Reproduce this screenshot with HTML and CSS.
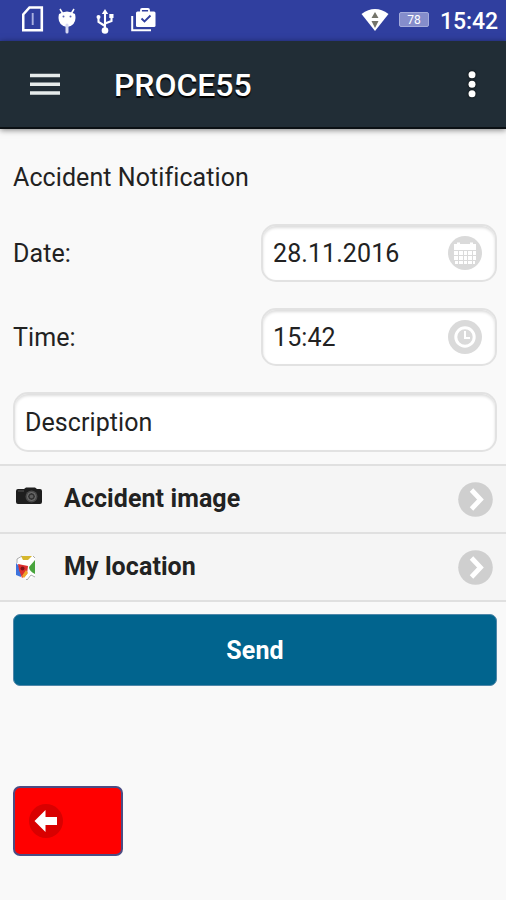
FILE: index.html
```html
<!DOCTYPE html>
<html lang="en">
<head>
<meta charset="utf-8">
<title>PROCE55</title>
<link rel="stylesheet" href="styles.css">
</head>
<body>
<div class="status">
  <div class="status-left">
    <svg width="22" height="26" viewBox="0 0 22 26"><path d="M7.500 1.500H19.800V24.300H1.200V8.500z" fill="none" stroke="#fff" stroke-width="2.600"/><path d="M10.700 7v12" stroke="#a9b0e0" stroke-width="1.900"/></svg>
    <svg class="droid" width="20" height="27" viewBox="0 0 20 27"><path d="M3 1l3 5M17 1l-3 5" stroke="#fff" stroke-width="1.500"/><path d="M2 6Q10 1 18 6Q20.500 17 10 19Q-.5 17 2 6z" fill="#fff"/><path d="M10 17v7" stroke="#d6d9f2" stroke-width="3" stroke-linecap="round"/><circle cx="6.500" cy="8.500" r="1" fill="#5963b5"/><circle cx="13.500" cy="8.500" r="1" fill="#5963b5"/></svg>
    <svg class="usb" width="18" height="26" viewBox="0 0 18 26"><path d="M9 3v19M9 17L2.500 13V8M9 14.500L15.500 12V7" fill="none" stroke="#fff" stroke-width="2.100"/><path d="M9 0l3.200 5H5.800z" fill="#fff"/><circle cx="2.500" cy="8" r="2" fill="#fff"/><path d="M13.300 5h4.200v4h-4.200z" fill="#fff"/><circle cx="9" cy="21.500" r="3.300" fill="#fff"/></svg>
    <svg class="bag" width="25" height="25" viewBox="0 0 25 25"><path d="M1.200 9v14.200H20" fill="none" stroke="#fff" stroke-width="2"/><path d="M10 5V3Q10 2 11 2h6q1 0 1 1v2" fill="none" stroke="#fff" stroke-width="1.800"/><rect x="5" y="4.500" width="19.500" height="15.500" rx="1.500" fill="#fff"/><path d="M10.500 11.500l3 3 6-6" fill="none" stroke="#303f9f" stroke-width="1.900"/></svg>
  </div>
  <div class="status-right">
    <svg width="28" height="24" viewBox="0 0 28 24"><path d="M.5 6Q14-4 27.500 6L14 23z" fill="#fff"/><path d="M14 4l3.500 6h-7zM10.500 13h7L14 20z" fill="#74746a"/></svg>
    <span class="battery">78</span>
    <span class="clock">15:42</span>
  </div>
</div>
<header class="bar">
  <svg class="menu" width="32" height="24" viewBox="0 0 32 24"><path d="M0 3.500h30M0 12.300h30M0 21h30" stroke="#e6ebeb" stroke-width="3.600"/></svg>
  <h1>PROCE55</h1>
  <svg class="more" width="8" height="28" viewBox="0 0 8 28"><g fill="#fff"><circle cx="4" cy="4.800" r="3.500"/><circle cx="4" cy="14.300" r="3.500"/><circle cx="4" cy="23.800" r="3.500"/></g></svg>
</header>
<main>
  <p class="title">Accident Notification</p>
  <div class="row">
    <span class="label">Date:</span>
    <div class="field"><span class="value">28.11.2016</span>
      <svg width="34" height="34" viewBox="0 0 34 34"><circle cx="17" cy="17" r="17" fill="#dadada"/><path d="M6 8h3V6.500h3V8h10V6.500h3V8h3v6H6z" fill="#fff"/><g fill="#fff"><path d="M6 15h4v4H6zM11 15h4v4h-4zM16 15h3v4h-3zM20 15h4v4h-4zM25 15h3v4h-3zM6 20h4v4H6zM11 20h4v4h-4zM16 20h3v4h-3zM20 20h4v4h-4zM25 20h3v4h-3zM7 25h3v3H7zM11 25h4v3h-4zM16 25h3v3h-3zM20 25h4v3h-4zM25 25h2v3h-2z"/></g></svg>
    </div>
  </div>
  <div class="row time">
    <span class="label">Time:</span>
    <div class="field"><span class="value">15:42</span>
      <svg width="34" height="34" viewBox="0 0 34 34"><circle cx="17" cy="17" r="17" fill="#dadada"/><circle cx="17" cy="17" r="9.200" fill="none" stroke="#fff" stroke-width="3"/><path d="M17 11v7h5" fill="none" stroke="#fff" stroke-width="2"/></svg>
    </div>
  </div>
  <div class="field description"><span class="value">Description</span></div>
  <div class="item">
    <svg class="thumb" width="26" height="18" viewBox="0 0 26 18"><path d="M8 2l2-1.500h9L21 2h3q2 0 2 2v11q0 2-2 2H2q-2 0-2-2V4q0-2 2-2z" fill="#1e1e1e"/><path d="M2 4h6" stroke="#555" stroke-width="1"/><circle cx="15.500" cy="9.500" r="6" fill="#494949"/><circle cx="15.500" cy="9.500" r="4" fill="#333" stroke="#777"/><circle cx="15.500" cy="9.500" r="1.800" fill="#5d5d5d"/></svg>
    <span>Accident image</span>
    <svg class="go" width="35" height="35" viewBox="0 0 35 35"><circle cx="17.500" cy="17.500" r="17.300" fill="#cfcfcf"/><path d="M13.500 8l9 9.500-9 9.500" fill="none" stroke="#fff" stroke-width="4.800"/></svg>
  </div>
  <div class="item second">
    <svg class="thumb map" width="20" height="26" viewBox="0 0 20 26"><path d="M1 5L5 1h12l2 2v18l-8 4-10-5z" fill="#fff"/><path d="M5 1h11l-4 4H7z" fill="#d6b72e"/><path d="M0 8l5 5v9l-5-2z" fill="#3e74dd"/><path d="M2 9l10 2-1 8-5 4-3-8z" fill="#dc2f2d"/><path d="M10 15l-4 6 2 2 4-5z" fill="#eea629"/><circle cx="6.500" cy="13.500" r="2" fill="#82131a"/><path d="M19 5v14q-6-3-6-7z" fill="#48a43c"/><path d="M1 8V4l5-3M10 24l1 1 4-5 4 2M17 1l2 2" fill="none" stroke="#999" stroke-width=".8"/></svg>
    <span>My location</span>
    <svg class="go" width="35" height="35" viewBox="0 0 35 35"><circle cx="17.500" cy="17.500" r="17.300" fill="#cfcfcf"/><path d="M13.500 8l9 9.500-9 9.500" fill="none" stroke="#fff" stroke-width="4.800"/></svg>
  </div>
  <div class="send"><span>Send</span></div>
  <div class="back"><svg width="34" height="34" viewBox="0 0 34 34"><circle cx="17" cy="17" r="17" fill="#d90000"/><path d="M5.500 17L16.500 6v7H28v8H16.500v7z" fill="#fff"/></svg></div>
</main>
</body>
</html>
```

FILE: styles.css
```css
* { box-sizing: border-box; }
body {
  margin: 0;
  height: 900px;
  overflow: hidden;
  background: #f9f9f9;
  color: #222;
  font: 25px/30px Roboto, sans-serif;
  letter-spacing: .08px;
}
svg { display: block; flex: none; }
span { white-space: nowrap; }
.status {
  height: 41px;
  padding: 0 9px 0 22px;
  display: flex;
  justify-content: space-between;
  background: #303f9f;
  color: #fff;
}
.status-left, .status-right { display: flex; align-items: flex-start; }
.status-left { padding-top: 6px; }
.droid { margin: 2px 0 0 13px; }
.usb { margin: 3px 0 0 19px; }
.bag { margin: 1px 0 0 17px; }
.status-right { padding-top: 8px; }
.battery {
  width: 30px;
  height: 15px;
  margin: 4px 0 0 10px;
  border: 1px solid #a4abdb;
  border-radius: 2px;
  background: #858dcb;
  font-size: 12px;
  line-height: 14px;
  text-align: center;
}
.clock {
  margin: -1px 0 0 11px;
  width: 57px;
  font-size: 23px;
  font-weight: 500;
  letter-spacing: -.1px;
}
.bar {
  height: 88px;
  padding: 0 30px;
  display: flex;
  align-items: center;
  background: #212d36;
  border-bottom: 2px solid #0b1014;
  box-shadow: 0 1px 6px rgba(0, 0, 0, .5);
}
h1 {
  flex: 1;
  margin: 2px 0 0 52px;
  color: #fff;
  font-size: 32px;
  font-weight: 500;
  line-height: 38px;
  letter-spacing: -.05px;
  text-shadow: 0 2px 1px #000;
}
.more { filter: drop-shadow(0 0 1px #000); }
.title { margin: 34px 13px 31px; }
.row {
  padding: 0 9px 0 13px;
  display: flex;
  align-items: center;
  justify-content: space-between;
}
.time { margin-top: 26px; }
.label, .row .value { padding-top: 2px; }
.field {
  width: 236px;
  height: 58px;
  padding: 0 13px 0 10px;
  display: flex;
  align-items: center;
  justify-content: space-between;
  border: 2px solid #e2e2e2;
  border-radius: 15px;
  background: #fff;
  box-shadow: inset 0 2px 3px #ddd;
}
.description { width: 484px; height: 60px; margin: 26px 9px 12px 13px; }
.description .value { padding-top: 1px; }
.item {
  height: 68px;
  padding: 0 13px 0 16px;
  display: flex;
  align-items: center;
  border-top: 2px solid #e0e0e0;
  background: #f5f5f5;
  font-weight: 700;
}
.second { height: 70px; border-bottom: 2px solid #e0e0e0; }
.thumb { margin: -6px 22px 0 0; }
.map { margin: 2px 28px 0 0; }
.go { margin-left: auto; }
.send {
  height: 72px;
  margin: 12px 9px 0 13px;
  padding-top: 1px;
  display: flex;
  align-items: center;
  justify-content: center;
  border: 1px solid #4f87a9;
  border-radius: 7px;
  background: #01648e;
  color: #fff;
  font-size: 25px;
  font-weight: 700;
}
.back {
  width: 110px;
  height: 70px;
  margin: 100px 0 0 13px;
  padding-left: 14px;
  display: flex;
  align-items: center;
  border: 2px solid #4c4c83;
  border-radius: 7px;
  background: #f00;
}
```
